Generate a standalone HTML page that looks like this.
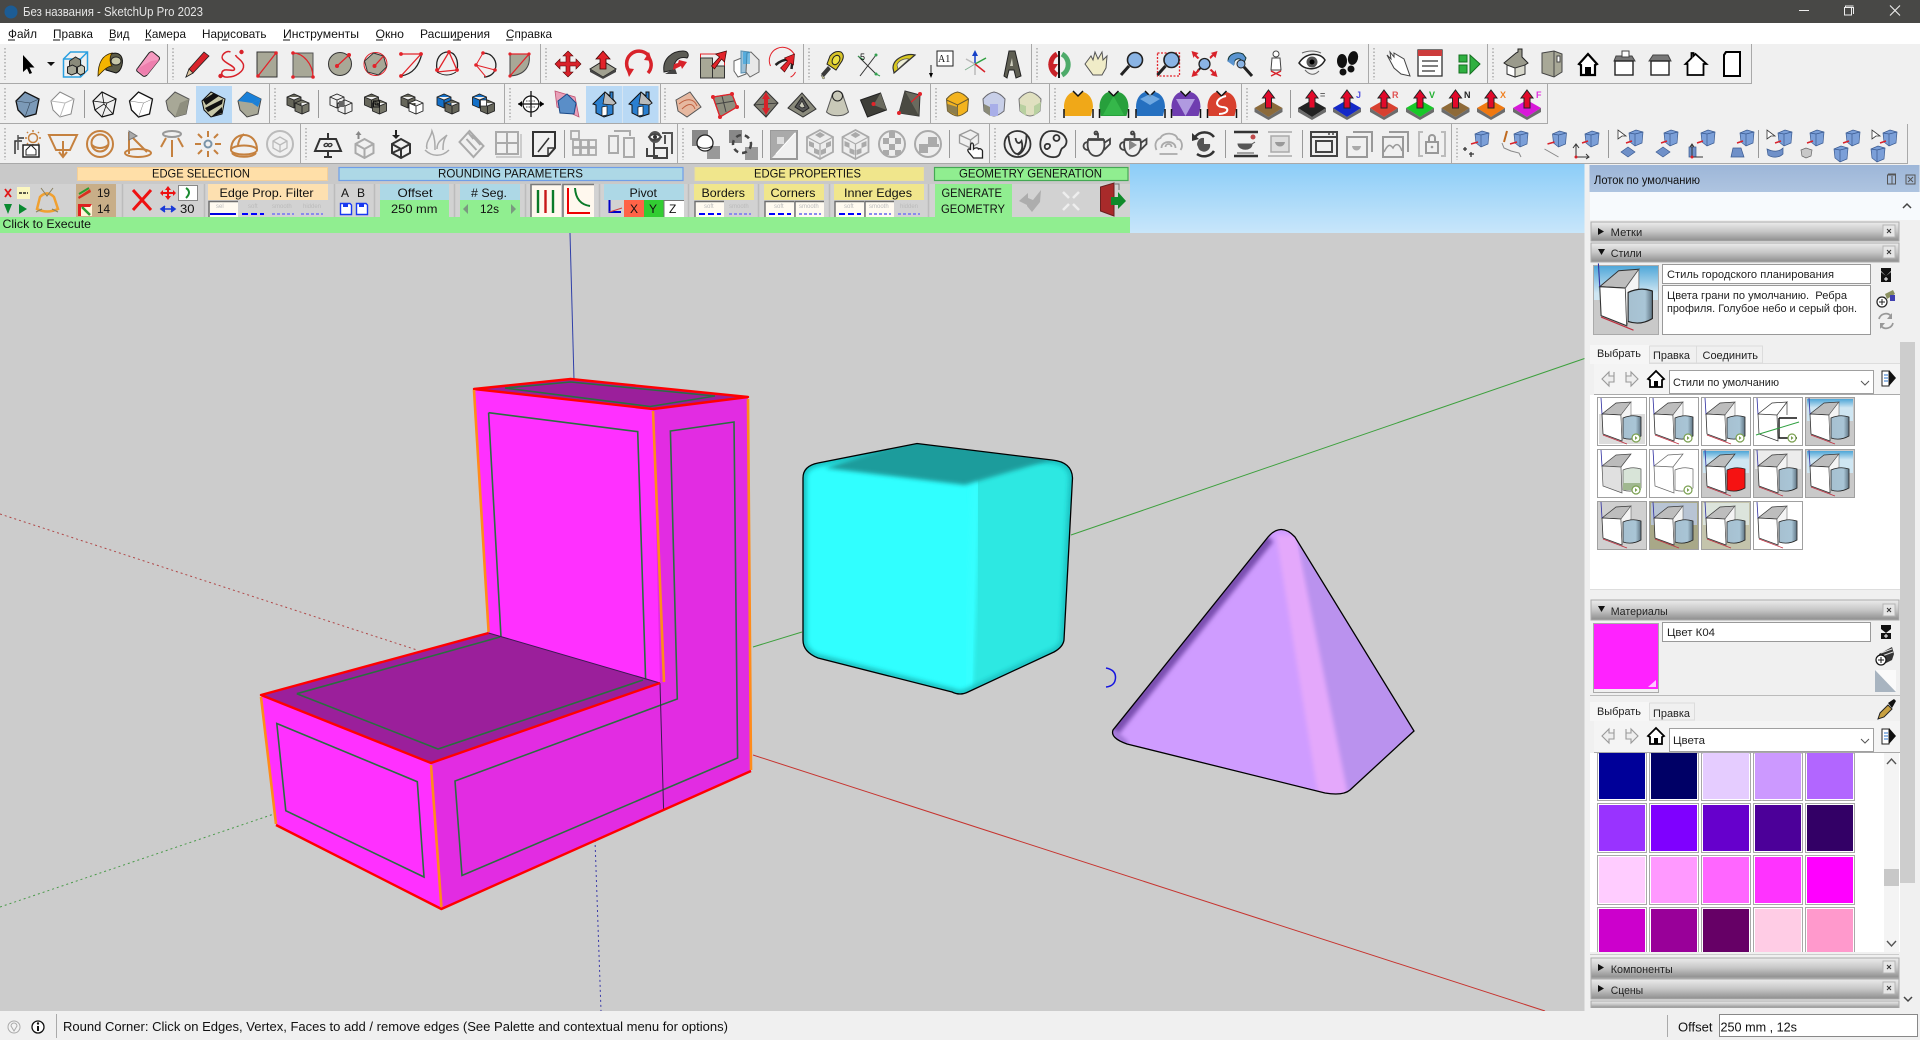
<!DOCTYPE html>
<html lang="ru"><head><meta charset="utf-8"><title>Без названия - SketchUp Pro 2023</title>
<style>
html,body{margin:0;padding:0;background:#f0f0f0;overflow:hidden}
svg{display:block}
text{font-family:"Liberation Sans","Noto Sans CJK SC",sans-serif;font-size:12px;fill:#111}
.r{font-size:12px;fill:#111}
.t{font-size:11px;fill:#222}
.tiny{font-size:6px;fill:#bbb}
</style></head><body>
<svg xmlns="http://www.w3.org/2000/svg" width="1920" height="1040" viewBox="0 0 1920 1040">
<defs>
<linearGradient id="sky" x1="0" y1="0" x2="0" y2="1"><stop offset="0" stop-color="#8ccdf8"/><stop offset="1" stop-color="#c8e6fa"/></linearGradient>
<linearGradient id="hdr" x1="0" y1="0" x2="0" y2="1"><stop offset="0" stop-color="#ececec"/><stop offset=".5" stop-color="#c6c6c6"/><stop offset="1" stop-color="#8d8d8d"/></linearGradient>
<linearGradient id="tray" x1="0" y1="0" x2="0" y2="1"><stop offset="0" stop-color="#9db6d8"/><stop offset="1" stop-color="#aec4e0"/></linearGradient>
<linearGradient id="thsky" x1="0" y1="0" x2="0" y2="1"><stop offset="0" stop-color="#4da6d8"/><stop offset=".4" stop-color="#cfe6f2"/></linearGradient>
<linearGradient id="cyl" x1="0" y1="0" x2="1" y2="0"><stop offset="0" stop-color="#a6c0d0"/><stop offset=".7" stop-color="#a9c5d6"/><stop offset="1" stop-color="#5f7482"/></linearGradient>
<filter id="b2" x="-20%" y="-20%" width="140%" height="140%"><feGaussianBlur stdDeviation="2"/></filter>
<filter id="b4" x="-20%" y="-20%" width="140%" height="140%"><feGaussianBlur stdDeviation="4"/></filter>
<clipPath id="cubeclip"><path id="cubep" d="M917 443.500 1052 460Q1072 462 1072.500 478L1064 640Q1063 647 1054 652L968 692Q960 696 952 692L818 658Q803 652 803 640V478Q803 466 818 463Z"/></clipPath>
<clipPath id="pyrclip"><path d="M1268 537Q1281 522 1295 537L1414 731 1350 790Q1343 796 1325 793L1127 744Q1110 738 1113 730Z"/></clipPath>
<g id="thgeo">
<path d="M5 17 19 6 34 5 24 18Z" fill="#bdbdbd" stroke="#333" stroke-width=".7"/>
<path d="M5 17 24 18 25 44 6 37Z" fill="#fff" stroke="#333" stroke-width=".8"/>
<path d="M24 18 34 5V18L25 44Z" fill="#f4f4f4" stroke="#555" stroke-width=".5"/>
<path d="M26 21Q35 17 44 20V39Q35 44 26 41Z" fill="url(#cyl)" stroke="#222" stroke-width=".8"/>
<path d="M4 1 5 17" stroke="#3030a0" stroke-width=".8"/>
<path d="M6 38 30 47" stroke="#c03040" stroke-width=".8"/>
</g>
<g id="thgeored">
<path d="M5 17 19 6 34 5 24 18Z" fill="#bdbdbd" stroke="#333" stroke-width=".7"/>
<path d="M5 17 24 18 25 44 6 37Z" fill="#fff" stroke="#333" stroke-width=".8"/>
<path d="M26 21Q35 17 44 20V39Q35 44 26 41Z" fill="#f51212" stroke="#222" stroke-width=".8"/>
<path d="M4 1 5 17" stroke="#3030a0" stroke-width=".8"/><path d="M6 38 30 47" stroke="#c03040" stroke-width=".8"/>
</g>
<g id="clock"><circle cx="39" cy="41" r="4" fill="#fff" stroke="#7aa050" stroke-width="1.200"/><path d="M38 39v4l2.500-2z" fill="#7aa050"/></g>
<path id="ar" d="M-5-9V8l4-3.500 2.500 5.500 2.500-1-2.500-5.500h5z" fill="#000"/>
<g id="comp"><path d="M-12-5-5-12H12V6L5 13H-12ZM-12-5H5V13M5-5 12-12" fill="none" stroke="#2a9fe0" stroke-width="1.500"/><path d="M-6-3 0-7 5-4V4L-1 7-6 4Z" fill="#8a8a7a" stroke="#222"/><path d="M-8 3-3 1 1 3V9L-4 11-8 9Z" fill="#a5a595" stroke="#222"/><path d="M2 3 6 1 9 3V9L5 11 2 9Z" fill="#c8c8b8" stroke="#222"/></g>
<g id="paint"><path d="M-5-4C-2-11 7-13 11-8 14-3 12 7 6 9L-4 6Z" fill="#5c5c48" stroke="#111"/><path d="M2-11C-8-9-12 0-12 12-8 8-3 2 2 2-1-2 0-8 2-11Z" fill="#f4b400" stroke="#332200" stroke-width=".8"/><ellipse cx="6" cy="-3" rx="5" ry="4" fill="#c8c8a8" stroke="#222"/></g>
<g id="erase"><path d="M-10 5 2-11Q4-13 6-12L12-7Q13-6 12-4L0 11Q-2 13-4 12L-9 8Q-11 7-10 5Z" fill="#f59ac0" stroke="#222"/><path d="M-10 5-5 10 0 11 12-4 4-3Z" fill="#ee7fae"/></g>
<g id="pencil"><path d="M-11 13-8 5 7-12 12-8-4 9Z" fill="#d8222a" stroke="#222" stroke-width=".8"/><path d="M-11 13-8 5-4 9Z" fill="#e0c8a0" stroke="#222" stroke-width=".8"/></g>
<g id="free" fill="#d8222a"><path d="M-2-12C-6-14-12-9-10-5-8-1 2 2 2 5 2 8-4 5-8 6-13 8-11 14-4 13 2 13 12 8 11 1 10-4 4-6 3-9" fill="none" stroke="#d8222a" stroke-width="1.500"/><circle cx="9" cy="-12" r="2.200"/><circle cx="-12" cy="12" r="2.200"/></g>
<g id="rect"><path d="M-10-12H10V13H-10Z" fill="#a8a897" stroke="#333"/><path d="M-9 12 9-11" stroke="#e2232a" stroke-width="1.300"/><circle cx="9" cy="-11" r="1.800" fill="#e2232a"/><circle cx="-9" cy="12" r="1.800" fill="#e2232a"/></g>
<g id="rrect"><path d="M-10-11H10V13H-10Z" fill="#a8a897" stroke="#555"/><path d="M-10-11C0-11 10 0 10 13" fill="none" stroke="#e2232a" stroke-width="1.300"/><g fill="#e2232a"><circle cx="-10" cy="-11" r="1.800"/><circle cx="-10" cy="13" r="1.800"/><circle cx="10" cy="13" r="1.800"/></g></g>
<g id="circ"><circle r="11.500" fill="#a8a897" stroke="#333"/><path d="M-3 2 9-9" stroke="#e2232a" stroke-width="1.300"/><circle cx="-3" cy="2" r="2" fill="#e2232a"/><circle cx="9" cy="-9" r="2" fill="#e2232a"/></g>
<g id="poly"><circle r="11.500" fill="none" stroke="#e2232a"/><path d="M-2-11 8-8 11 3 3 11-8 8-11-3Z" fill="#a8a897" stroke="#333"/><path d="M-1 2 8-8" stroke="#e2232a" stroke-width="1.300"/><circle cx="-1" cy="2" r="2" fill="#e2232a"/></g>
<g id="arc1"><path d="M-10 12C2 10 8 2 11-11" fill="none" stroke="#222" stroke-width="1.300"/><path d="M-10-10H10L-10 12" fill="none" stroke="#e2232a" stroke-width="1.300"/><g fill="#e2232a"><circle cx="-10" cy="-10" r="1.900"/><circle cx="10" cy="-10" r="1.900"/><circle cx="-10" cy="12" r="1.900"/></g></g>
<g id="arc2"><path d="M-10 6C-12-6-6-12 1-12 8-12 12-4 10 6" fill="none" stroke="#222" stroke-width="1.300"/><path d="M-10 8 2-12 10 6 -10 8" fill="none" stroke="#e2232a" stroke-width="1.300"/><path d="M-10 8Q0 14 9 8" fill="none" stroke="#222"/><g fill="#e2232a"><circle cx="-10" cy="6" r="1.900"/><circle cx="2" cy="-12" r="1.900"/><circle cx="10" cy="6" r="1.900"/></g></g>
<g id="arc3"><path d="M-2-11C8-11 13-2 10 6 8 11 3 13-1 13" fill="none" stroke="#222" stroke-width="1.300"/><path d="M-2-11-9 1 10 6M-9 1 1 13" fill="none" stroke="#e2232a" stroke-width="1"/><g fill="#e2232a"><circle cx="-2" cy="-11" r="1.800"/><circle cx="-9" cy="1" r="1.800"/><circle cx="10" cy="6" r="1.800"/></g></g>
<g id="pie"><path d="M-9-10H10C12 2 6 11-9 12Z" fill="#a8a897" stroke="#444"/><path d="M-9 12 10-10H-9" fill="none" stroke="#e2232a" stroke-width="1.300"/><g fill="#e2232a"><circle cx="-9" cy="-10" r="1.600"/><circle cx="10" cy="-10" r="1.600"/><circle cx="-9" cy="12" r="1.600"/></g></g>
<g id="move" fill="#d8222a" stroke="#500" stroke-width=".6"><path d="M0-13 5-8H2V-2H8V-5L13 0 8 5V2H2V8H5L0 13-5 8H-2V2H-8V5L-13 0-8-5V-2H-2V-8H-5Z"/></g>
<g id="pp"><path d="M-13 5 0-3 13 5 0 13Z" fill="#a0a090" stroke="#222"/><path d="M-13 5V8L0 15V13ZM13 5V8L0 15V13Z" fill="#444"/><path d="M0-13 7-5H3V5H-3V-5H-7Z" fill="#e2232a" stroke="#400" stroke-width=".8"/></g>
<g id="rot"><path d="M-9 8A12 12 0 0 1 9-9" fill="none" stroke="#d8222a" stroke-width="3.500"/><path d="M9 9A12 12 0 0 0 10-6" fill="none" stroke="#d8222a" stroke-width="3.500"/><path d="M-13 4-5 5-10 13ZM13-3 5-4 10-12Z" fill="#d8222a"/></g>
<g id="follow"><path d="M-12 8C-14-5-4-13 7-13 13-13 13-8 11-6 3-8-3-3-2 6Z" fill="#5c5c55" stroke="#222"/><path d="M-11 10-1 4 1 10Z" fill="#444"/><path d="M3-4 11-2 6 5 5 2-3 6-2 0 2-1Z" fill="#d8222a"/></g>
<g id="scale"><rect x="-12" y="-10" width="24" height="24" fill="none" stroke="#e2232a"/><path d="M-12-6H0V14H-12Z M0 2H12V14H0Z" fill="#a8a897" stroke="#333"/><path d="M-1 2 7-7 3-10 14-13 12-2 9-5 2 5Z" fill="#e2232a" stroke="#400" stroke-width=".7"/></g>
<g id="offs"><path d="M-13-3-3-7-1 10-9 13-13 7Z" fill="#fff" stroke="#666"/><path d="M-6-13 2-12V8L-6 9Z" fill="#9cc0d8" stroke="#5a90b0"/><path d="M0-11 4-12 12-4V8L3 13-1 8Z" fill="#e8e8e8" stroke="#666"/><path d="M-4-12 3-12 3 0-4 0Z" fill="#2a9fe0" opacity=".6"/></g>
<g id="shell"><path d="M-13 2A13 13 0 0 1 11-9M12 8Q10 12 7 13" fill="none" stroke="#e2232a" stroke-width="1"/><path d="M-8 1Q0-6 9-4L8 5" fill="none" stroke="#222" stroke-width="2.500"/><path d="M-3 4 4-3 1-6 11-10 10 1 7-1 1 8Z" fill="#e2232a" stroke="#400" stroke-width=".6"/></g>
<g id="tape"><path d="M-2-8Q3-14 9-12 13-9 10-3L4 6-5 0Z" fill="#d8c428" stroke="#222"/><ellipse cx="4" cy="-4" rx="3.500" ry="5" transform="rotate(30 4 -4)" fill="#ece040" stroke="#222"/><path d="M-4 2-11 10-8 13-1 5Z" fill="#3a3a3a"/><path d="M-11 11-7 14-9 15Z" fill="#e2e2a0" stroke="#444" stroke-width=".5"/></g>
<g id="dim"><path d="M-8 12 8-9M-10-8 8 10" fill="none" stroke="#333"/><path d="M-10-8-4-4M8 10 12 12" stroke="#33a050"/><text x="-8" y="-4" style="font-size:9px">5</text><circle cx="8" cy="-9" r="1.500" fill="#33a050"/><circle cx="8" cy="10" r="1.500" fill="#33a050"/></g>
<g id="prot"><path d="M-10 9 11-9C3-11-11-6-11 4Z" fill="#d8c820" stroke="#333" stroke-width="1.200"/><path d="M-6 5 5-5C0-6-6-3-7 1Z" fill="#f0f0d8" stroke="#555" stroke-width=".7"/></g>
<g id="txt"><rect x="-5" y="-13" width="16" height="15" fill="#fff" stroke="#222"/><text x="-4" y="-2" style="font-size:10px;font-family:'Liberation Serif',serif">A1</text><path d="M-11 1V10" stroke="#222"/><path d="M-13 9H-9L-11 14Z" fill="#000"/></g>
<g id="axes"><path d="M0 0V-12" stroke="#1540c8" stroke-width="1.500"/><path d="M0 0 11-6" stroke="#30a040" stroke-width="1.500"/><path d="M0 0-9-5M0 0 0 11" stroke="#bbb" stroke-width="1.500"/><path d="M0 0 10 8" stroke="#d8222a" stroke-width="1.500"/><path d="M0 0-10 6" stroke="#80b090"/><path d="M-3-8 0-14 3-8Z" fill="#1540c8"/></g>
<g id="t3d"><path d="M-7 12-2-13H4L10 12 5 14 3 6H-2L-4 14Z" fill="#5e5e52" stroke="#222"/><path d="M-1 2H2L1-6Z" fill="#d0d0c0"/></g>
<g id="orbit"><path d="M-3-10A12 12 0 0 0-3 11" fill="none" stroke="#c82228" stroke-width="5"/><path d="M2-10A12 12 0 0 1 2 11" fill="none" stroke="#4eab6a" stroke-width="5"/><path d="M-1-13V14" stroke="#000" stroke-width="1.800"/><path d="M-12 0-6 6-2 0Z" fill="#c82228"/></g>
<g id="hand"><path d="M-11 0-5-8-3-4-1-12 2-5 6-12 7-4 11-8 10 4 6 11H-3Z" fill="#f0ecc8" stroke="#555"/></g>
<g id="zoom"><circle cx="3" cy="-4" r="7.500" fill="#8ab4e4" stroke="#222" stroke-width="1.600"/><path d="M-3 2-11 11" stroke="#222" stroke-width="3"/></g>
<g id="zoomw"><rect x="-11" y="-11" width="22" height="23" fill="none" stroke="#e2232a" stroke-dasharray="2 1.500" stroke-width="1.300"/><use href="#zoom"/></g>
<g id="zoomx"><circle cx="0" cy="0" r="5.500" fill="#8ab4e4" stroke="#222" stroke-width="1.300"/><path d="M-4 4-7 7" stroke="#222" stroke-width="2"/><path d="M-13-13-6-11-8-9-5-6-7-5-10-8-11-6ZM13-13 11-6 9-8 6-5 5-7 8-10 6-11ZM-13 13-11 6-9 8-6 5-5 7-8 10-6 11ZM13 13 6 11 8 9 5 6 7 5 10 8 11 6Z" fill="#d8222a"/></g>
<g id="zoomp"><path d="M-12-3C-12-10-3-13 3-10L6-6 4-1 0-5C-3-6-6-4-6 0Z" fill="#5a94d0" stroke="#133"/><path d="M-13-3-6 2-5-7Z" fill="#5a94d0"/><circle cx="1" cy="0" r="4" fill="#8ab4e4" stroke="#222"/><path d="M4 3 12 12" stroke="#222" stroke-width="3"/></g>
<g id="poscam"><ellipse cy="-10" rx="3" ry="3" fill="#fff" stroke="#444"/><path d="M-4-6H4L5 6H-5Z" fill="#fff" stroke="#444"/><path d="M-5 12 5 7M5 12-5 7" stroke="#d8222a" stroke-width="1.400"/></g>
<g id="look"><path d="M-13-1C-6-12 8-12 13-4 8 6-6 8-13-1Z" fill="#fff" stroke="#222" stroke-width="1.500"/><circle cx="0" cy="-2" r="5.500" fill="#555"/><circle cx="0" cy="-2" r="2.500" fill="#000"/><path d="M-7 6Q0 14 7 7M-10-11Q0-15 9-11" fill="none" stroke="#666"/></g>
<g id="walk" fill="#111"><ellipse cx="-5" cy="-3" rx="5" ry="7"/><ellipse cx="-4" cy="8" rx="3.500" ry="3.500"/><ellipse cx="6" cy="-6" rx="5" ry="7" transform="rotate(15 6 -6)"/><ellipse cx="4" cy="5" rx="3.500" ry="3.500"/></g>
<g id="hand2"><path d="M-4-11 6-5 12 12 3 10-4 4-11-9-7-5-8-12-4-7Z" fill="#fff" stroke="#444"/></g>
<g id="list"><rect x="-12" y="-14" width="24" height="26" fill="#fff" stroke="#333" stroke-width="1.300"/><rect x="-12" y="-14" width="24" height="6" fill="#cd3c3c"/><path d="M-8-3H8M-8 2H8M-8 7H5" stroke="#333" stroke-width="1.300"/></g>
<g id="green"><path d="M-9-9H-1V-2H-9ZM-9 1H-1V9H-9ZM2-9 12 0 2 10Z" fill="#2fb040" stroke="#147020"/></g>
<g id="vhouse"><path d="M-12-1 0-11 2-12V-15H6V-7L12-1 9 1V10L-1 13-9 10V1Z" fill="#9a9a8c" stroke="#222"/><path d="M-9 1-1 4-1 13-9 10Z" fill="#fff" stroke="#333"/><path d="M-1 4 9 1V10L-1 13Z" fill="#d8d8cc" stroke="#333"/></g>
<g id="vdoor"><path d="M-10-11 2-13 10-10V8L2 13-10 9Z" fill="#a8a897" stroke="#444"/><path d="M2-13V13" stroke="#444"/><rect x="5" y="-8" width="3" height="6" fill="#fff" stroke="#444"/></g>
<g id="vhm"><path d="M0-10-9 0-7 1V11H7V1L9 0Z" fill="#fff" stroke="#000" stroke-width="2.200"/><path d="M-3 11V3H3V11Z" fill="#000"/></g>
<g id="vroof"><path d="M-10-3-8-8-2-8-2-13H5V-8H8L11-3Z" fill="#777" stroke="#444"/><rect x="-9" y="-3" width="18" height="14" fill="#fff" stroke="#222" stroke-width="1.400"/><rect x="-2" y="-13" width="7" height="6" fill="#fff" stroke="#444"/></g>
<g id="vroof2"><path d="M-11-3-7-9H8L11-3Z" fill="#777" stroke="#444"/><rect x="-9" y="-3" width="18" height="14" fill="#fff" stroke="#222" stroke-width="1.400"/></g>
<g id="vhse"><path d="M-10 0-4-6V-11H-2V-8L0-10 11 0 8 0V11H-8V0Z" fill="#fff" stroke="#000" stroke-width="1.800"/></g>
<g id="vflat"><path d="M-5-12H9V12H-7V-9Z" fill="#fff" stroke="#000" stroke-width="2"/><path d="M-5-12-7-9V-3" fill="none" stroke="#000" stroke-width="2"/></g>
<g id="f1"><path d="M-12-3-3-12 11-5 8 10-3 13-10 6Z" fill="#7c9ab8" stroke="#111" stroke-width="1.300"/><path d="M-12-3 2-1-3 13M2-1 11-5" fill="none" stroke="#345" stroke-width=".6"/></g>
<g id="f2"><path d="M-12-3-3-12 11-5 8 10-3 13-10 6Z" fill="#fff" stroke="#888"/><path d="M-12-3 2-1-3 13M2-1 11-5" fill="none" stroke="#bbb"/></g>
<g id="f3"><path d="M-12-3-3-12 11-5 8 10-3 13-10 6Z" fill="none" stroke="#111" stroke-width="1.200"/><path d="M-12-3 2-1-3 13M2-1 11-5M-10 6-1 0 8 10M-3-12-1 0" fill="none" stroke="#111" stroke-width=".8"/></g>
<g id="f4"><path d="M-12-3-3-12 11-5 8 10-3 13-10 6Z" fill="#fff" stroke="#111" stroke-width="1.300"/><path d="M-12-3 2-1-3 13M2-1 11-5" fill="none" stroke="#777" stroke-width=".5"/></g>
<g id="f5"><path d="M-12-3-3-12 11-5 8 10-3 13-10 6Z" fill="#a8a897" stroke="#555"/><path d="M2-1-3 13 8 10 11-5Z" fill="#8e8e7e"/></g>
<g id="f6"><path d="M-12-3-3-12 11-5 8 10-3 13-10 6Z" fill="#c8c8a8" stroke="#111"/><path d="M-11-4 0-11 5-8-8 1ZM-9 4 9-5 8 0-6 8ZM-3 13 8 3 8 9Z" fill="#111"/></g>
<g id="f7"><path d="M-12-3-3-12 11-5 8 10-3 13-10 6Z" fill="#a8a897" stroke="#444"/><path d="M-12-3-3-12 11-5 2-1Z" fill="#1a80d8"/><path d="M2-1 11-5 8 3Z" fill="#1a80d8"/></g>
<path id="ck" d="M-7-4 0-7 7-4V4L0 7-7 4ZM-7-4 0-1 7-4M0-1V7" stroke="#222" stroke-width=".9"/>
<g id="x1" fill="#66665a"><use href="#ck" x="-4" y="-3"/><use href="#ck" x="4" y="3" fill="#77776a"/></g>
<g id="x2" fill="none"><use href="#ck" x="-4" y="-3"/><use href="#ck" x="4" y="3"/><rect x="-2" y="-3" width="5" height="6" fill="#666"/></g>
<g id="x3" fill="#66665a"><use href="#ck" x="-4" y="-3"/><use href="#ck" x="4" y="3" fill="#77776a"/><rect x="-2" y="-3" width="6" height="6" fill="none" stroke="#111"/><rect x="0" y="-1" width="2" height="2" fill="none" stroke="#111" stroke-width=".7"/></g>
<g id="x4"><use href="#ck" x="-4" y="-3" fill="#66665a"/><use href="#ck" x="4" y="3" fill="#fff"/></g>
<g id="x5"><use href="#ck" x="-4" y="-3" fill="#1470c8"/><use href="#ck" x="4" y="3" fill="#66665a"/></g>
<g id="x6"><use href="#ck" x="-4" y="-3" fill="#1470c8"/><use href="#ck" x="4" y="3" fill="#66665a"/><rect x="-3" y="-4" width="6" height="6" fill="#fff" stroke="#222" stroke-width=".7"/></g>
<g id="sec"><circle r="8" fill="#fff" stroke="#111" stroke-width="1.200"/><path d="M-13 0H13M0-13V13" stroke="#111" stroke-width="1.300"/><path d="M-5-3H5M-5 3H5" stroke="#555" stroke-dasharray="1.500 1"/><path d="M-13 0-9-3V3ZM13 0 9-3V3Z"/></g>
<g id="sp"><path d="M-12-13 8-7 12 13-10 3Z" fill="#e8a0b8" stroke="#c05070" stroke-width=".8"/><path d="M-9-3 0-10 9-1 7 10-7 9Z" fill="#5a8ec8" stroke="#1a4a88"/></g>
<g id="hs1"><path d="M-11 0 1-12 6-8V-12H9V-5L12-1 9 1V10L0 13-8 9V1Z" fill="#2a7fd0" stroke="#111"/><path d="M1-12 12-1 9 1-1 0Z" fill="#bbb" stroke="#111" stroke-width=".7"/><path d="M-2 3 3 2V11L-2 12Z" fill="#fff" stroke="#111" stroke-width=".7"/></g>
<g id="sand"><path d="M-12-4 2-12 13 3-1 13-10 7Z" fill="#e6b8a0" stroke="#555"/><path d="M-9 0C-2-6 6-6 9 2M-6 5C0-1 5-1 7 5" fill="none" stroke="#c06040" stroke-width="1"/></g>
<g id="sand2"><path d="M-11-7 8-10 13 3-4 13Z" fill="#8e8e7e" stroke="#444"/><path d="M-11-7-4 13M8-10 13 3M-2-8 2 8M-8 0 10-3" stroke="#444" fill="none"/><path d="M-11-7 8-10 13 3-4 13Z" fill="none" stroke="#e2232a" stroke-width="1.300"/><g fill="#e2232a"><circle cx="-11" cy="-7" r="2"/><circle cx="8" cy="-10" r="2"/><circle cx="13" cy="3" r="2"/><circle cx="-4" cy="13" r="2"/></g></g>
<g id="sand3"><path d="M-12 1 0-13 12-1 0 13Z" fill="#807e72" stroke="#333"/><path d="M0-13 0 13M-12 1 12-1" stroke="#333" stroke-width=".8"/><path d="M0-12 4-5H2V4H4L0 11-4 4H-2V-5H-4Z" fill="#d8222a"/></g>
<g id="sand4"><path d="M-14 4 0-11 14 5 1 13Z" fill="#8a8a7c" stroke="#333"/><path d="M-7 3 0-7 7 4 1 8Z" fill="#555" stroke="#222"/><path d="M-3 2 0-3 3 3 0 4Z" fill="#c8c8b8" stroke="#222" stroke-width=".7"/></g>
<g id="sand5"><path d="M-7-4C-5-9-6-12 0-13 6-12 5-9 7-4L11 8C6 13-6 13-11 8Z" fill="#c8c8b8" stroke="#555"/><ellipse cy="-8" rx="5" ry="5" fill="none" stroke="#222"/></g>
<g id="sand6"><path d="M-13-4 7-11 13 6-6 13Z" fill="#3e3e38" stroke="#222"/><path d="M7-11 13 6 0 1Z" fill="#6a6a5e"/><circle r="2" fill="#e2232a"/></g>
<g id="sand7"><path d="M-10 9-4-13 11-9 10 12Z" fill="#6a6a5e" stroke="#333"/><path d="M-10 9 10-9" stroke="#e2232a" stroke-width="1.300"/><path d="M-4-13-10 9 10 12Z" fill="#4a4a42"/><circle cx="-10" cy="9" r="2" fill="#e2232a"/><circle cx="11" cy="-10" r="2" fill="#e2232a"/></g>
<g id="rc1"><path d="M-11-5Q-6-11 0-12 6-11 11-5L10 7Q4 12 0 12-4 12-10 7Z" fill="#f4b41f" stroke="#6a5a30"/><path d="M-11-4 0 1 11-5M0 1V12" stroke="#6a5a30" fill="none"/><path d="M-10 0V7L0 12V3Z" fill="#8e7e4c"/></g>
<g id="rc2"><path d="M-11-5Q-6-11 0-12 6-11 11-5L10 7Q4 12 0 12-4 12-10 7Z" fill="#c8cfe8" stroke="#6a6a70"/><path d="M-4 0H4V12H-4Z" fill="#a8aee8"/><path d="M-10 0-4 3V12L-10 7Z" fill="#8a8a78"/></g>
<g id="rc3"><path d="M-11-5Q-6-11 0-12 6-11 11-5L10 7Q4 12 0 12-4 12-10 7Z" fill="#e0e0c0" stroke="#777"/><path d="M-10 0-4 2V12L-10 7ZM4 2 11-2 10 7 4 12Z" fill="#b8d0a0"/></g>
<g id="big"><path d="M-14 3C-14-6-9-11-5-12L0-8 5-12C10-11 15-6 15 3L13 12H-13Z"/><path d="M-5-13 0-8 5-13M-14 5V14M15 5V14" fill="none" stroke="#111" stroke-width="1.500"/></g>
<g id="pps"><path d="M-14 4 0-4 14 4 0 13Z"/><path d="M-14 4 0 13V16L-14 8ZM14 4 0 13V16L14 8Z" fill="#333" opacity=".7"/><path d="M0-14 6-6H3V4H-3V-6H-6Z" fill="#e2092a" stroke="#222" stroke-width="1"/></g>
<g id="o0"><path d="M-6-3H-13V10M-10-6H-4" fill="none" stroke="#333" stroke-width="1.500"/><path d="M-10-9V6" stroke="#555" fill="none" stroke-width="1.500"/><circle cx="5" cy="-6" r="4.500" fill="none" stroke="#c5813f" stroke-width="1.500"/><path d="M5-14V-12M5 0V2M-3-6H-1M11-6H13M-1-12 0-11M10-1 11 0M11-12 10-11M0-1-1 0" stroke="#c5813f" stroke-width="1.500"/><rect x="-5" y="1" width="16" height="12" fill="#fff" stroke="#222" stroke-width="1.500"/><path d="M-2 6 3 1 8 6V11H-2Z" fill="#fff" stroke="#222"/></g>
<g id="o1" fill="none" stroke="#c5813f" stroke-width="2"><path d="M-14-9H14L7 6H-7Z"/><path d="M0-3V13M-4 8 0 13 4 8"/></g>
<g id="o2" fill="none" stroke="#c5813f" stroke-width="2"><circle r="13"/><circle cy="-1" r="8.500"/><path d="M-8 1C-4 5 4 5 8 1"/></g>
<g id="o3" fill="none" stroke="#c5813f" stroke-width="2"><path d="M-8-10 10 8"/><path d="M-8-12V10"/><ellipse cx="1" cy="9" rx="13" ry="4"/><path d="M-8-13-8-4 0-8Z" fill="#aaa" stroke="#777" stroke-width="1"/></g>
<g id="o4" fill="none" stroke="#c5813f" stroke-width="2"><path d="M0-4V13M-11 3-6-6M11 3 6-6"/><ellipse cy="-10" rx="9" ry="3" stroke="#999"/></g>
<g id="o5" fill="none" stroke="#c5813f" stroke-width="2"><circle r="3.500" stroke="#7a94a8"/><path d="M0-13V-7M0 7V13M-13 0H-7M7 0H13M-10-10-6-6M6 6 10 10M10-10 6-6M-6 6-10 10"/></g>
<g id="o6" fill="none" stroke="#c5813f" stroke-width="2"><path d="M-13 6C-13-14 13-14 13 6"/><ellipse cy="6" rx="13" ry="4.500"/><path d="M-12 9C-8 14 8 14 12 9M0-10C-5-6-6 0-6 2"/></g>
<g id="o7" fill="none" stroke="#bbb" stroke-width="2"><circle r="13"/><path d="M0-7-7-3V4L0 8 7 4V-3ZM-7-3 0 1 7-3M0 1V8" stroke-width="1.300"/></g>
<g id="g1" fill="none" stroke="#333" stroke-width="2"><path d="M-8-5H8L13 7H-13ZM0-11V-5M0 7V13M-4 13H4"/><path d="M-4 1C-2-2 0 0 0 1 0 2 2 4 4 1 4-1 1-1 0 1-1 3-4 3-4 1Z" stroke-width="1.300"/></g>
<g id="g2" fill="none" stroke="#aaa" stroke-width="2"><path d="M0-5-9 0V9L0 14 9 9V0ZM-9 0 0 5 9 0M0 5V14"/><path d="M-9-9-6-13-3-9Z" fill="#888" stroke="none"/><path d="M-6-9V-5" stroke="#888"/></g>
<g id="g3" fill="none" stroke="#333" stroke-width="2"><path d="M0-5-9 0V9L0 14 9 9V0ZM-9 0 0 5 9 0M0 5V14M-9 9 0 5"/><path d="M-9-9-5-5-1-9Z" fill="#222" stroke="none"/><path d="M-5-14V-8" stroke="#222"/></g>
<g id="g4" fill="none" stroke="#aaa" stroke-width="1.500"><path d="M-10 5C-12-2-6-6-5-13-2-6-2 0-2 6M0 5C0-3 6-5 10-9 6-4 6 2 6 6M-12 6C-5 13 5 13 12 6"/></g>
<g id="g5" fill="none" stroke="#aaa" stroke-width="2"><path d="M-12-2-2-13 12 2 2 13Z"/><path d="M-5-5 5 6M0-9 9 1M-3-11 2-5"/></g>
<g id="g6" fill="none" stroke="#aaa" stroke-width="2"><rect x="-12" y="-12" width="11" height="11"/><rect x="-1" y="-12" width="11" height="11"/><rect x="-12" y="-1" width="11" height="11"/><rect x="-1" y="-1" width="11" height="11"/><path d="M-12 13H13V-10" stroke="#ccc"/></g>
<g id="g7" fill="none" stroke="#333" stroke-width="2"><path d="M-11-12H11V4L4 12H-11Z"/><path d="M4 12V4H11M-6 8 5-6" stroke-width="1.500"/></g>
<g id="g8" fill="none" stroke="#aaa" stroke-width="1.800"><rect x="-13" y="-13" width="8" height="8"/><rect x="-3" y="-4" width="7" height="7"/><rect x="5" y="-4" width="7" height="7"/><rect x="-3" y="4" width="7" height="7"/><rect x="5" y="4" width="7" height="7"/><rect x="-11" y="-4" width="7" height="7"/><rect x="-11" y="4" width="7" height="7"/></g>
<g id="g9" fill="none" stroke="#aaa" stroke-width="2"><path d="M-13-8H-4V9H-13ZM-8-13H8V-8M2-6H12V13H2Z"/></g>
<g id="g10" fill="none" stroke="#444" stroke-width="2"><path d="M-11 4V12H0M-4 4H9V14H-4Z M-4-5 V4"/><circle cx="-3" cy="-7" r="5" stroke="#555"/><path d="M-9-7C-6-11 0-11 3-7-1-3-6-3-9-7Z" fill="#fff"/><circle cx="-3" cy="-7" r="2" fill="#333" stroke="none"/><path d="M4-11H14V10M7-9V0" stroke="#555"/></g>
<g id="h1"><rect x="-13" y="-14" width="16" height="16" fill="#888"/><rect x="2" y="2" width="13" height="13" fill="#999"/><circle cy="-1" cx="0" r="8" fill="#fff" stroke="#222" stroke-width="1.300"/><path d="M-7 2C-4 5 4 5 7 2" fill="none" stroke="#222"/></g>
<g id="h2"><rect x="-13" y="-14" width="13" height="13" fill="#888"/><rect x="3" y="3" width="13" height="13" fill="#999"/><circle r="9" fill="none" stroke="#444" stroke-width="2.500" stroke-dasharray="5 4"/></g>
<g id="h3"><rect x="-13" y="-13" width="26" height="28" fill="none" stroke="#999" stroke-width="2"/><path d="M-13 15V-13H13Z" fill="#aaa"/><path d="M-7-7H0V0H-7Z" fill="#ddd"/><path d="M-8 10 11-11" stroke="#fff"/></g>
<g id="h4" fill="#aaa" stroke="#aaa"><path d="M0-14-13-7V8L0 15 13 8V-7Z" fill="#ededed" stroke-width="1.800"/><path d="M-13-7 0 0 13-7M0 0V15" fill="none" stroke-width="1.200"/><path d="M-11-3-6-1V4L-11 2ZM-6 4-1 6V11L-6 9ZM6-1 11-3V2L6 4ZM1 6 6 4V9L1 11ZM-5-9 0-6 5-9 0-12Z" stroke="none"/></g>
<g id="h5"><circle r="13" fill="#ededed" stroke="#aaa" stroke-width="2"/><path d="M-9-6H-3V0H-9ZM3-6H9V0H3ZM-3 0H3V6H-3ZM-9 6H-3V11H-9ZM3 6H9V11H3ZM-3-12H3V-6H-3Z" fill="#aaa"/></g>
<g id="h6"><circle r="13" fill="#ededed" stroke="#aaa" stroke-width="2"/><path d="M-11 0H0V-7H9V0ZM-9 0H0V9H-9ZM0 0H11V3H0Z" fill="#aaa"/></g>
<g id="h7"><path d="M-11-9 0-14 8-10V-1L0 4-11-1Z" fill="none" stroke="#999" stroke-width="1.300"/><path d="M-11-9 0-4 8-10M0-4V4" fill="none" stroke="#999" stroke-width="1.300"/><path d="M0 2C0-2 3-2 3 2V5C5 3 8 4 8 5 10 4 12 6 12 7V14H3L-2 8C-4 5-1 4 0 6Z" fill="#fff" stroke="#222" stroke-width="1.300"/></g>
<g id="j1" fill="none" stroke="#333" stroke-width="1.800"><circle r="13"/><path d="M-9-8C-8 3-4 10 0 10 4 8 6 4 4-3 2 0-1 0-2-6M9-9C9 0 7 8 0 11" /></g>
<g id="j2" fill="none" stroke="#333" stroke-width="1.800"><path d="M-2-13C-11-13-14-4-13 3-12 10-5 14 2 13 8 12 6 6 9 4 13 2 14-3 12-6 10-11 4-13-2-13Z"/><circle cx="3" cy="-6" r="3"/><path d="M-7 0C-3-1-2 3-6 5-9 6-10 1-7 0Z"/></g>
<g id="tp" fill="none" stroke="#444" stroke-width="1.800"><path d="M-8-4C-10 8-4 12 0 12 4 12 10 8 8-4Z"/><path d="M-8-5H8M-2-10H2V-6M-8-2C-14-2-14 6-8 6M8-1 14-5V0L8 6"/><circle cy="-11" r="1.500"/></g>
<g id="cl" fill="none" stroke="#aaa" stroke-width="1.800"><path d="M-12 6C-15-1-11-5-8-6-6-12 8-12 9-5 13-5 15 2 12 6M-9 10H9M-7 4C-7-4 7-4 7 4M-3 3C-3-1 3-1 3 3"/></g>
<g id="ref"><path d="M-9-7A12 12 0 0 1 10-7M10 7A12 12 0 0 1-7 10" fill="none" stroke="#333" stroke-width="2.500"/><path d="M-12-11-12-3-5-5Z" fill="#333"/><path d="M0-6V0H6A6 6 0 0 1-6 3 6 6 0 0 1 0-6Z" fill="#555"/></g>
<g id="tb1"><path d="M-12-12H12M-12 12H12" stroke="#333" stroke-width="2.500"/><path d="M-8 0C-7 7 6 7 6 0ZM-9 9H8" fill="#555" stroke="#555"/><path d="M6 0 9-2" stroke="#555"/><circle cx="7" cy="-7" r="2.500" fill="#c0494a"/></g>
<g id="tb2"><path d="M-12-12H12M-12 12H12" stroke="#bbb" stroke-width="2"/><rect x="-9" y="-8" width="18" height="16" fill="#ddd" stroke="#aaa" stroke-width="1.500"/><path d="M-5-2C-4 4 4 4 5-2Z" fill="#999"/></g>
<g id="fr1" fill="none" stroke="#444" stroke-width="2"><rect x="-13" y="-12" width="26" height="24"/><path d="M-13-7H13"/><rect x="-8" y="-3" width="16" height="11"/><path d="M4-10H6M8-10H10" stroke-width="1.500"/></g>
<g id="fr2" fill="none" stroke="#999" stroke-width="2"><rect x="-13" y="-7" width="20" height="20"/><path d="M-7-12H12V8"/><path d="M-8 2C-7 8 0 8 1 2Z" fill="#aaa" stroke="none"/></g>
<g id="fr3" fill="none" stroke="#999" stroke-width="2"><rect x="-13" y="-7" width="20" height="20"/><path d="M-7-12H12V8"/><path d="M-12 8C-8 0-6 0-3 4 -1 0 3-2 6 7" stroke-width="1.500"/></g>
<g id="fr4" fill="none" stroke="#bbb" stroke-width="2"><path d="M-9-12H-13V12H-9M9-12H13V12H9"/><rect x="-6" y="-2" width="12" height="11" stroke="#999"/><path d="M-3-2V-6C-3-10 3-10 3-6V-2" stroke="#999"/><circle cy="3" r="1.300" fill="#999" stroke="none"/></g>
<g id="cub"><path d="M-7-3 0-6 7-4 6 7-1 10-6 6Z" fill="#7b9fd8" stroke="#3a5a90" stroke-width=".7"/><path d="M-1-2V10M-7-3-1-2 7-4" fill="none" stroke="#3a5a90" stroke-width=".7"/></g>
<g id="ax1"><use href="#cub" x="6" y="-7"/><path d="M-5 0 2-2" stroke="#d8222a" stroke-width="1.500"/><path d="M-13 5H-9M-11 3V7M-7 10H-2M-5 8V13" stroke="#333" stroke-width="1.300"/></g>
<g id="ax2"><use href="#cub" x="8" y="-7"/><path d="M-6-13-9-2" stroke="#c06a20" stroke-width="2"/><path d="M-11-1-9 4-2 7 6 9 8 13" fill="none" stroke="#888"/><path d="M-3 0 4-2" stroke="#d8222a" stroke-width="1.500"/></g>
<g id="ax3"><use href="#cub" x="7" y="-7"/><path d="M-8 5 6 13" stroke="#888" stroke-width="1"/><path d="M-5 0 2-2" stroke="#d8222a" stroke-width="1.500"/></g>
<g id="ax4"><use href="#cub" x="8" y="-7"/><path d="M-8 13V1M-8 13H4M-11 4-8 0-5 4M2 10 5 13 2 15" fill="none" stroke="#333"/><circle cx="-8" cy="13" r="1.500" fill="#d8222a"/><path d="M-2-1 4-3" stroke="#d8222a" stroke-width="1.500"/></g>
<g id="ax5"><use href="#cub" x="7" y="-8"/><path d="M-11-14-11-5-7-8H-3Z" fill="#fff" stroke="#333" stroke-width=".8"/><path d="M-3-1 3-3" stroke="#d8222a" stroke-width="1.500"/><path d="M-8 8-1 3 6 8-1 13Z" fill="#6f90c8" stroke="#3a5a90" stroke-width=".7"/></g>
<g id="ax6"><use href="#cub" x="7" y="-8"/><path d="M-3-1 3-3" stroke="#d8222a" stroke-width="1.500"/><path d="M-8 8-1 3 6 8-1 13Z" fill="#6f90c8" stroke="#3a5a90" stroke-width=".7"/></g>
<g id="ax7"><use href="#cub" x="8" y="-8"/><path d="M-3-1 3-3" stroke="#d8222a" stroke-width="1.500"/><path d="M-11 3H-4V13H-11Z" fill="#6f90c8" stroke="#3a5a90" stroke-width=".7"/><path d="M-8 13V0M-8 13H3M-10 3-8 0-6 3" fill="none" stroke="#333"/><circle cx="-8" cy="13" r="1.500" fill="#d8222a"/></g>
<g id="ax8"><use href="#cub" x="8" y="-8"/><path d="M-2-1 4-3" stroke="#d8222a" stroke-width="1.500"/><path d="M-8 13-6 4H2L5 13Z" fill="#6f90c8" stroke="#3a5a90" stroke-width=".7"/></g>
<g id="ax9"><use href="#cub" x="7" y="-8"/><path d="M-11-14-11-5-7-8H-3Z" fill="#fff" stroke="#333" stroke-width=".8"/><path d="M-3-1 3-3" stroke="#d8222a" stroke-width="1.500"/><path d="M-11 5C-5 8 1 8 5 4V10C1 14-6 14-10 11Z" fill="#6f90c8" stroke="#3a5a90" stroke-width=".7"/></g>
<g id="ax10"><use href="#cub" x="8" y="-8"/><path d="M-2-1 4-3" stroke="#d8222a" stroke-width="1.500"/><path d="M-8 6-3 4 3 6 2 12-3 14-7 12Z" fill="#c8c8c8" stroke="#666" stroke-width=".7"/></g>
<g id="ax11"><use href="#cub" x="8" y="-8"/><path d="M-2-1 4-3" stroke="#d8222a" stroke-width="1.500"/><use href="#cub" x="-4" y="8"/></g>
<g id="ax12"><use href="#cub" x="8" y="-8"/><path d="M-10-14-10-5-6-8H-2Z" fill="#fff" stroke="#333" stroke-width=".8"/><path d="M-2-1 4-3" stroke="#d8222a" stroke-width="1.500"/><use href="#cub" x="-4" y="8"/></g>
<g id="dash1"><path d="M0 0H22" stroke="#00f" stroke-width="2" stroke-dasharray="6 3"/></g>
<g id="dash2"><path d="M0 0H22" stroke="#8a8aee" stroke-width="2" stroke-dasharray="3 2"/></g>
<g id="floppy"><path d="M-5.500-5.500H4L5.500-4V5.500H-5.500Z" fill="#fff" stroke="#1a3af0" stroke-width="1.400"/><path d="M-3-5H2V-2H-3Z" fill="#1a3af0"/></g>
<g id="nback"><path d="M6-6V-2H1V-6L-6 1 1 8V4H6Z" transform="translate(0 -1)" fill="#eee" stroke="#999" stroke-width="1.100"/></g>
<g id="nfwd"><path d="M-6-6V-2H-1V-6L6 1-1 8V4H-6Z" transform="translate(0 -1)" fill="#eee" stroke="#999" stroke-width="1.100"/></g>
<g id="home"><path d="M0-8-8 0-6 1V8H6V1L8 0Z" fill="#fff" stroke="#000" stroke-width="1.800"/><path d="M-2 8V2H2V8Z" fill="#000"/></g>
<g id="det"><path d="M-6-7H1V8H-6Z" fill="#fff" stroke="#222"/><path d="M1-8 8 0 1 8Z" fill="#111"/><path d="M-4-3H0M-4 0H0M-4 3H0" stroke="#2a70c8"/></g>
<g id="hdrclose"><rect x="-6" y="-6" width="12" height="12" fill="#e6e6e6" stroke="#b5b5b5"/><path d="M-2-2 2 2M2-2-2 2" stroke="#333"/></g>
</defs>

<rect width="1920" height="1040" fill="#f0f0f0"/>
<rect width="1920" height="23" fill="#484846"/>
<circle cx="11" cy="12" r="6.500" fill="#1c5c94"/>
<text x="23" y="16" textLength="180" lengthAdjust="spacingAndGlyphs" style="font-size:13px;fill:#e4e4e4">Без названия - SketchUp Pro 2023</text>
<path d="M1799 10.500H1809" stroke="#eee"/><path d="M1845.500 7.500H1853.500V14M1845.500 7.500V6H1853.500" fill="none" stroke="#eee"/><rect x="1844.500" y="7.500" width="7" height="7.500" fill="none" stroke="#eee"/><path d="M1890 5.500 1900 15.500M1900 5.500 1890 15.500" stroke="#eee" stroke-width="1.100"/>

<rect y="23" width="1920" height="21" fill="#fff"/>
<g>
<text x="8" y="38" textLength="29" lengthAdjust="spacingAndGlyphs">Файл</text><path d="M8 40H15" stroke="#111"/>
<text x="53" y="38" textLength="40" lengthAdjust="spacingAndGlyphs">Правка</text><path d="M53 40H60" stroke="#111"/>
<text x="109" y="38" textLength="20.500" lengthAdjust="spacingAndGlyphs">Вид</text><path d="M109 40H115" stroke="#111"/>
<text x="145" y="38" textLength="41" lengthAdjust="spacingAndGlyphs">Камера</text><path d="M145 40H151" stroke="#111"/>
<text x="202" y="38" textLength="64.500" lengthAdjust="spacingAndGlyphs">Нарисовать</text><path d="M222 40H228" stroke="#111"/>
<text x="283" y="38" textLength="76" lengthAdjust="spacingAndGlyphs">Инструменты</text><path d="M283 40H290" stroke="#111"/>
<text x="375.500" y="38" textLength="28.500" lengthAdjust="spacingAndGlyphs">Окно</text><path d="M376 40H383" stroke="#111"/>
<text x="420" y="38" textLength="70" lengthAdjust="spacingAndGlyphs">Расширения</text><path d="M453 40H461" stroke="#111"/>
<text x="506" y="38" textLength="46" lengthAdjust="spacingAndGlyphs">Справка</text><path d="M506 40H513" stroke="#111"/>
</g>

<path d="M0 83.500H1751.500V44M0 123.500H1547.500V84M0 163.500H1907.500V124" fill="none" stroke="#a9a9a9"/>
<path d="M167.500 44V83M540.500 44V83M803.500 44V83M1031.500 44V83M1368.500 44V83M1487.500 44V83 M269.500 84V123M504.500 84V123M660.500 84V123M930.500 84V123M1049.500 84V123M1241.500 84V123 M300.500 124V163M677.500 124V163M989.500 124V163M1451.500 124V163" stroke="#a9a9a9"/>
<path d="M5 48V80M173 48V80M546 48V80M809 48V80M1037 48V80M1374 48V80M1493 48V80 M5 88V120M275 88V120M510 88V120M665 88V120M936 88V120M1055 88V120M1247 88V120 M5 128V160M306 128V160M683 128V160M995 128V160M1457 128V160" stroke="#999" stroke-width="1.200" stroke-dasharray="1.500 2"/>
<path d="M84.500 90V118M318.500 90V118M744.500 90V118M1290.500 90V118 M564.500 130V158M762.500 130V158M949.500 130V158M1075.500 130V158M1225.500 130V158M1302.500 130V158M1608.500 130V158M1758.500 130V158" stroke="#999"/>
<rect x="196" y="86" width="36" height="37" fill="#b9d9f5"/>
<rect x="586" y="86" width="36" height="37" fill="#b9d9f5"/><rect x="622.500" y="86" width="36" height="37" fill="#b9d9f5"/>

<use href="#ar" x="28" y="64"/><path d="M47 62H55L51 66Z" fill="#111"/>
<use href="#comp" x="75.500" y="64"/><use href="#paint" x="110" y="64"/><use href="#erase" x="147" y="64"/>
<use href="#pencil" x="197" y="64"/><use href="#free" x="232.500" y="64"/><use href="#rect" x="267" y="64"/><use href="#rrect" x="303" y="64"/><use href="#circ" x="340" y="64"/><use href="#poly" x="375.500" y="64"/><use href="#arc1" x="411" y="64"/><use href="#arc2" x="447" y="64"/><use href="#arc3" x="485" y="64"/><use href="#pie" x="519" y="64"/>
<use href="#move" x="568" y="64"/><use href="#pp" x="603" y="64"/><use href="#rot" x="639" y="64"/><use href="#follow" x="676" y="64"/><use href="#scale" x="712.500" y="64"/><use href="#offs" x="747" y="64"/><use href="#shell" x="783.500" y="64"/>
<use href="#tape" x="832" y="64"/><use href="#dim" x="868" y="64"/><use href="#prot" x="904" y="64"/><use href="#txt" x="942" y="64"/><use href="#axes" x="975" y="64"/><use href="#t3d" x="1011" y="64"/>
<use href="#orbit" x="1060" y="64"/><use href="#hand" x="1096" y="64"/><use href="#zoom" x="1132" y="64"/><use href="#zoomw" x="1168.500" y="64"/><use href="#zoomx" x="1204.500" y="64"/><use href="#zoomp" x="1240" y="64"/><use href="#poscam" x="1276" y="64"/><use href="#look" x="1312" y="64"/><use href="#walk" x="1347" y="64"/>
<use href="#hand2" x="1398" y="64"/><use href="#list" x="1430" y="64"/><use href="#green" x="1468" y="64"/>
<use href="#vhouse" x="1516" y="64"/><use href="#vdoor" x="1552" y="64"/><use href="#vhm" x="1588" y="64"/><use href="#vroof" x="1624" y="64"/><use href="#vroof2" x="1660" y="64"/><use href="#vhse" x="1695.500" y="64"/><use href="#vflat" x="1731" y="64"/>

<use href="#f1" x="28" y="104"/><use href="#f2" x="63" y="104"/><use href="#f3" x="105" y="104"/><use href="#f4" x="141.500" y="104"/><use href="#f5" x="178" y="104"/><use href="#f6" x="214" y="104"/><use href="#f7" x="250" y="104"/>
<use href="#x1" x="298" y="104"/><use href="#x2" x="341" y="104"/><use href="#x3" x="375.500" y="104"/><use href="#x4" x="412" y="104"/><use href="#x5" x="448" y="104"/><use href="#x6" x="483.500" y="104"/>
<use href="#sec" x="531" y="104"/><use href="#sp" x="567" y="104"/><use href="#hs1" x="604" y="104"/><use href="#hs1" x="640" y="104"/>
<use href="#sand" x="688" y="104"/><use href="#sand2" x="724" y="104"/><use href="#sand3" x="766" y="104"/><use href="#sand4" x="802" y="104"/><use href="#sand5" x="837.500" y="104"/><use href="#sand6" x="873.500" y="104"/><use href="#sand7" x="909" y="104"/>
<use href="#rc1" x="957.500" y="104"/><use href="#rc2" x="994" y="104"/><use href="#rc3" x="1030" y="104"/>
<g fill="#f0a818"><use href="#big" x="1078" y="104"/></g>
<g fill="#27a03c"><use href="#big" x="1113.500" y="104"/></g><path d="M1113.500 96 1124 115H1103Z" fill="#3cc050" opacity=".7"/>
<g fill="#2570c0"><use href="#big" x="1150" y="104"/></g><path d="M1140 99 1150 94 1160 99 1150 105Z" fill="#8fc0f0" opacity=".7"/>
<g fill="#6f3db0"><use href="#big" x="1185.500" y="104"/></g><path d="M1176 99H1195L1185.500 116Z" fill="#b09ae0"/>
<g fill="#d8402e"><use href="#big" x="1221.500" y="104"/></g><path d="M1226 96C1216 98 1214 106 1222 107 1230 107 1229 114 1219 114" fill="none" stroke="#fff" stroke-width="2"/>
<g fill="#8c6a3a"><use href="#pps" x="1268.500" y="104"/></g>
<g fill="#222"><use href="#pps" x="1312" y="104"/></g>
<g fill="#1428c8"><use href="#pps" x="1347" y="104"/></g>
<g fill="#d84030"><use href="#pps" x="1384" y="104"/></g>
<g fill="#18c828"><use href="#pps" x="1420" y="104"/></g>
<g fill="#8e6a38"><use href="#pps" x="1455.500" y="104"/></g>
<g fill="#f07810"><use href="#pps" x="1491" y="104"/></g>
<g fill="#d818d8"><use href="#pps" x="1527" y="104"/></g>
<text x="1320" y="98" style="font-size:9px;font-weight:bold;fill:#666">=</text><text x="1356" y="98" style="font-size:9px;font-weight:bold;fill:#5050e0">J</text><text x="1392" y="98" style="font-size:9px;font-weight:bold;fill:#e05050">R</text><text x="1429" y="98" style="font-size:9px;font-weight:bold;fill:#20b030">V</text><text x="1464" y="98" style="font-size:9px;font-weight:bold;fill:#222">N</text><text x="1500" y="98" style="font-size:9px;font-weight:bold;fill:#f08020">X</text><text x="1536" y="98" style="font-size:9px;font-weight:bold;fill:#e030e0">F</text>

<use href="#o0" x="28" y="144"/><use href="#o1" x="63" y="144"/><use href="#o2" x="100" y="144"/><use href="#o3" x="137" y="144"/><use href="#o4" x="172" y="144"/><use href="#o5" x="208" y="144"/><use href="#o6" x="244" y="144"/><use href="#o7" x="280" y="144"/>
<use href="#g1" x="328" y="144"/><use href="#g2" x="364.500" y="144"/><use href="#g3" x="401" y="144"/><use href="#g4" x="437" y="144"/><use href="#g5" x="471.500" y="144"/><use href="#g6" x="508" y="144"/><use href="#g7" x="544" y="144"/>
<use href="#g8" x="584" y="144"/><use href="#g9" x="622" y="144"/><use href="#g10" x="658" y="144"/>
<use href="#h1" x="705" y="144"/><use href="#h2" x="742" y="144"/><use href="#h3" x="784" y="144"/><use href="#h4" x="820" y="144"/><use href="#h4" x="855.500" y="144"/><use href="#h5" x="892" y="144"/><use href="#h6" x="928" y="144"/><use href="#h7" x="970.500" y="144"/>
<use href="#j1" x="1017.500" y="144"/><use href="#j2" x="1053.500" y="144"/><use href="#tp" x="1096" y="144"/><use href="#tp" x="1132.500" y="144"/><path d="M1129 140 1137 145 1129 150Z" fill="#888"/><use href="#cl" x="1168.500" y="144"/><use href="#ref" x="1204" y="144"/>
<use href="#tb1" x="1246" y="144"/><use href="#tb2" x="1280" y="144"/>
<use href="#fr1" x="1324" y="144"/><use href="#fr2" x="1360" y="144"/><use href="#fr3" x="1396" y="144"/><use href="#fr4" x="1432" y="144"/>
<use href="#ax1" x="1476" y="144"/><use href="#ax2" x="1513" y="144"/><use href="#ax3" x="1552.500" y="144"/><use href="#ax4" x="1584" y="144"/>
<use href="#ax5" x="1629" y="144"/><use href="#ax6" x="1664" y="144"/><use href="#ax7" x="1700" y="144"/><use href="#ax8" x="1739" y="144"/>
<use href="#ax9" x="1778" y="144"/><use href="#ax10" x="1809" y="144"/><use href="#ax11" x="1845" y="144"/><use href="#ax12" x="1882" y="144"/>

<rect x="0" y="233" width="1584.500" height="778" fill="#cccccc"/>
<rect x="1130" y="164" width="454.500" height="69" fill="url(#sky)"/>
<g fill="none">
<path d="M570 233 574 380" stroke="#2f3fa8"/>
<path d="M753 755 1545 1011" stroke="#c6342f"/>
<path d="M1586 358 1071 535M802 632 753 647" stroke="#3da03d"/>
<path d="M0 514 417 650" stroke="#b04848" stroke-dasharray="2 3"/>
<path d="M0 907 274 814" stroke="#4a9a4a" stroke-dasharray="2 3"/>
<path d="M595 840 601 1011" stroke="#3a3aa8" stroke-dasharray="2 3"/>
</g>
<path d="M474 389 653 409 664 690 488.600 633Z" fill="#ff30ff"/>
<path d="M653 409 748 397 751 771 441.400 909 431 763 660 683Z" fill="#e22ce2"/>
<path d="M261 695 431 763 441.400 909 276 825Z" fill="#ff30ff"/>
<path d="M474 389 570.600 379 748 397 653 409Z" fill="#9b1f9b"/>
<path d="M261 695 488.600 633 660 683 431 763Z" fill="#9b1f9b"/>
<g fill="none" stroke="#2a6e40" stroke-width="1.600">
<path d="M488.600 412.700 637.700 431.600 645.600 679M488.600 412.700 501 637"/>
<path d="M670.400 431 734 422 737.600 758 462 875.500 455 781 677.300 699Z"/>
<path d="M276.800 723.500 417.300 781.700 424 877 285.800 810.700Z"/>
<path d="M296.800 693.700 500 637M296.800 693.700 438 749 643 680"/>
<path d="M505 388 570.600 382 715 396 650 406.500Z"/>
</g>
<path d="M488.600 633 660 683M660 683 663.600 810" stroke="#3a1a50" fill="none"/>
<g fill="none" stroke="#ff0000" stroke-width="2.400" stroke-linejoin="round">
<path d="M474 389 570.600 379 748 397 653 409Z"/>
<path d="M488.600 633 261 695 431 763 660 683"/>
<path d="M276 825 441.400 909 751 771"/>
</g>
<g fill="none" stroke="#ff8c1a" stroke-width="2.600">
<path d="M474 390 488.600 632M653 411 664 682M748 399 751 770M261 697 276 824M431 765 441.400 907"/>
</g>
<g clip-path="url(#cubeclip)">
<rect x="795" y="435" width="290" height="265" fill="#30ffff"/>
<path d="M976 478 1075 450 1075 650 972 700Z" fill="#2de8e2"/>
<path d="M976 480 968 690" stroke="#36ffff" stroke-width="10" filter="url(#b2)" fill="none"/>
<path d="M917 443.500 1052 460Q1072 462 1072.500 478L1064 640Q1063 647 1054 652L968 692Q960 696 952 692L818 658Q803 652 803 640V478Q803 466 818 463Z" fill="none" stroke="#1cc4c4" stroke-width="8" filter="url(#b2)"/>
<path d="M825 468 917 438 1064 456 978 481 965 485Z" fill="#1f9c9c" filter="url(#b2)"/>
</g>
<path d="M917 443.500 1052 460Q1072 462 1072.500 478L1064 640Q1063 647 1054 652L968 692Q960 696 952 692L818 658Q803 652 803 640V478Q803 466 818 463Z" fill="none" stroke="#000" stroke-width="1.300"/>
<g clip-path="url(#pyrclip)">
<rect x="1105" y="525" width="320" height="280" fill="#cf9cff"/>
<path d="M1295 530 1420 730 1350 800 1335 792Z" fill="#ba92ee"/>
<path d="M1276 535 1296 535 1348 795 1318 795Z" fill="#e4a8fb" filter="url(#b2)"/>
<path d="M1268 537 1113 730" stroke="#7a50b0" stroke-width="14" fill="none" filter="url(#b2)"/>
<path d="M1113 732 1127 744" stroke="#9a70d0" stroke-width="5" fill="none" filter="url(#b2)"/>
</g>
<path d="M1268 537Q1281 522 1295 537L1414 731 1350 790Q1343 796 1325 793L1127 744Q1110 738 1113 730Z" fill="none" stroke="#000" stroke-width="1.300"/>
<path d="M1106 668Q1116 670 1115.500 678 1115 686 1106 687" fill="none" stroke="#1515e0" stroke-width="1.500"/>

<rect x="0" y="164" width="1130" height="69" fill="#c9c9c9"/>
<rect x="0" y="184" width="1130" height="33" fill="#d2d2d2"/>
<rect x="0" y="217" width="1130" height="16" fill="#90ee90"/>
<rect x="77.500" y="167.500" width="250" height="13" fill="#ffdfa8" stroke="#f4cf98"/>
<rect x="339" y="167.500" width="344" height="13" fill="#add8e6" stroke="#6f9ee8" stroke-width="1.200"/>
<rect x="695" y="167.500" width="228.500" height="13" fill="#f0e68c" stroke="#ece09a"/>
<rect x="934.500" y="167.500" width="193.500" height="13" fill="#90ee90" stroke="#45a855" stroke-width="1.200"/>
<text class="r" x="152" y="177.500" textLength="98" lengthAdjust="spacingAndGlyphs">EDGE SELECTION</text>
<text class="r" x="438" y="177.500" textLength="145" lengthAdjust="spacingAndGlyphs">ROUNDING PARAMETERS</text>
<text class="r" x="754" y="177.500" textLength="107" lengthAdjust="spacingAndGlyphs">EDGE PROPERTIES</text>
<text class="r" x="959" y="177.500" textLength="143" lengthAdjust="spacingAndGlyphs">GEOMETRY GENERATION</text>

<path d="M5 189 11 197M11 189 5 197" stroke="#e01818" stroke-width="1.800"/>
<rect x="17" y="187" width="13" height="12" fill="#fbf7c0"/><path d="M19 193H28" stroke="#222" stroke-width="1.400" stroke-dasharray="3 1"/>
<path d="M4 204H12L8 214Z" fill="#0a8a30"/><path d="M19 204 27 209 19 214Z" fill="#0a8a30"/>
<g fill="none" stroke="#f0a030" stroke-width="2.500"><path d="M40 197Q47 190 54 197L58 209Q47 214 37 209Z"/></g><path d="M41 188 47 196 53 188M36 212 42 209M58 212 52 209" stroke="#8a8060" fill="none"/>
<rect x="76" y="184" width="40" height="33" fill="#c8ae88"/>
<path d="M78 197 90 189 91 192 79 199Z" fill="#d83020"/><path d="M79 194 89 188" stroke="#2a9a30" stroke-width="2"/>
<path d="M78 204H92V216H78Z" fill="#fff4d8"/><path d="M78 204H92L90 207H81V216H78Z" fill="#e02020"/><path d="M82 207 90 215" stroke="#2a9a30" stroke-width="2.500"/>
<text class="r" x="97" y="197" textLength="13" lengthAdjust="spacingAndGlyphs">19</text><text class="r" x="97" y="213" textLength="13" lengthAdjust="spacingAndGlyphs">14</text>
<path d="M122.500 184V217M204.500 184V217M334.500 184V217M374.500 184V217M454.500 184V217M525.500 184V217M599.500 184V217M688.500 184V217M758.500 184V217M829.500 184V217M928.500 184V217" stroke="#bcbcbc" stroke-width="1.500"/>
<path d="M133 190 151 210M151 190 133 210" stroke="#ee1111" stroke-width="3"/>
<path d="M168 186 171 190H169V192H173V190L176 193 173 196V194H169V196H171L168 200 165 196H167V194H163V196L160 193 163 190V192H167V190H165Z" fill="#ee1111"/>
<path d="M161 209H175M165 206 161 209 165 212M171 206 175 209 171 212" fill="#1a3ad8" stroke="#1a3ad8" stroke-width="1.600"/>
<rect x="178.500" y="185.500" width="19" height="15" fill="#fff" stroke="#888"/><path d="M186 188Q192 192 186 198" fill="none" stroke="#1a8a30" stroke-width="2"/>
<text class="r" x="180" y="213" textLength="14.500" lengthAdjust="spacingAndGlyphs">30</text>
<rect x="208" y="184" width="120" height="16" fill="#fde0b0"/>
<text class="r" x="219.500" y="197" textLength="94" lengthAdjust="spacingAndGlyphs">Edge Prop. Filter</text>
<rect x="209" y="201" width="29" height="16" fill="#fffaf0"/><path d="M209 217V201.500H238" fill="none" stroke="#6e6e6e" stroke-width="1.500"/>
<path d="M210 214H236" stroke="#0000e0" stroke-width="2"/>
<text class="tiny" x="216" y="208">sel</text>
<use href="#dash1" x="242" y="214"/><text class="tiny" x="248" y="208">soft</text>
<use href="#dash2" x="272" y="214"/><text class="tiny" x="272" y="208">smooth</text>
<use href="#dash2" x="301" y="214"/><text class="tiny" x="303" y="208">hidden</text>
<text class="r" x="341" y="197">A</text><text class="r" x="357" y="197">B</text>
<use href="#floppy" x="346" y="209"/><use href="#floppy" x="362" y="209"/>
<rect x="380" y="184" width="69" height="16" fill="#add8e6"/><rect x="380" y="200" width="69" height="17" fill="#90ee90"/>
<text class="r" x="397.500" y="197" textLength="35" lengthAdjust="spacingAndGlyphs">Offset</text>
<text class="r" x="391" y="213" textLength="46.500" lengthAdjust="spacingAndGlyphs">250 mm</text>
<rect x="460" y="184" width="60" height="16" fill="#add8e6"/><rect x="460" y="200" width="60" height="17" fill="#90ee90"/>
<text class="r" x="471" y="197" textLength="36" lengthAdjust="spacingAndGlyphs"># Seg.</text>
<text class="r" x="480" y="213" textLength="19" lengthAdjust="spacingAndGlyphs">12s</text>
<path d="M468 204 463 209 468 214ZM511 204 516 209 511 214Z" fill="#7a9a80"/>
<rect x="531" y="184" width="30" height="33" fill="#fff8ee"/><path d="M531 217V184.500H561" fill="none" stroke="#7a7a7a" stroke-width="1.600"/>
<path d="M538 190V213M553 190V213" stroke="#0a7a28" stroke-width="2.400"/><path d="M545.500 190V213" stroke="#c81818" stroke-width="2.400"/>
<rect x="563" y="184" width="31" height="33" fill="#fff8ee"/><path d="M563 217V184.500H594" fill="none" stroke="#7a7a7a" stroke-width="1.600"/>
<path d="M568 188V213H590" fill="none" stroke="#ee0000" stroke-width="2"/><path d="M575 188Q576 204 590 206" fill="none" stroke="#0a7a28" stroke-width="2"/>
<rect x="604" y="184" width="80" height="16" fill="#add8e6"/>
<text class="r" x="629.500" y="197" textLength="27.500" lengthAdjust="spacingAndGlyphs">Pivot</text>
<path d="M609.500 200V212H621" fill="none" stroke="#0000c8" stroke-width="2"/><path d="M609.500 212 622 208" stroke="#d04040"/>
<rect x="624" y="200" width="20" height="17" fill="#ff6347"/><rect x="644" y="200" width="20" height="17" fill="#32cd32"/><rect x="664" y="200" width="20" height="17" fill="#fff"/><path d="M664 217V200.500H684" stroke="#777" fill="none"/>
<text class="r" x="630" y="213">X</text><text class="r" x="649" y="213">Y</text><text class="r" x="669" y="213">Z</text>
<rect x="694" y="184" width="60" height="16" fill="#f0e68c"/><rect x="764" y="184" width="60" height="16" fill="#f0e68c"/><rect x="834" y="184" width="90" height="16" fill="#f0e68c"/>
<text class="r" x="701.500" y="197" textLength="43.500" lengthAdjust="spacingAndGlyphs">Borders</text>
<text class="r" x="770.500" y="197" textLength="45" lengthAdjust="spacingAndGlyphs">Corners</text>
<text class="r" x="844" y="197" textLength="68" lengthAdjust="spacingAndGlyphs">Inner Edges</text>
<g fill="#fffaf0"><rect x="695" y="201" width="29" height="16"/><rect x="765" y="201" width="29" height="16"/><rect x="795" y="201" width="29" height="16"/><rect x="835" y="201" width="29" height="16"/><rect x="865" y="201" width="29" height="16"/></g>
<path d="M695 217V201.500H724M765 217V201.500H794M795 217V201.500H824M835 217V201.500H864M865 217V201.500H894" fill="none" stroke="#6e6e6e" stroke-width="1.400"/>
<use href="#dash1" x="699" y="214"/><use href="#dash2" x="729" y="214"/><use href="#dash1" x="769" y="214"/><use href="#dash2" x="799" y="214"/><use href="#dash1" x="839" y="214"/><use href="#dash2" x="869" y="214"/><use href="#dash2" x="898" y="214"/>
<text class="tiny" x="704" y="208">soft</text><text class="tiny" x="729" y="208">smooth</text><text class="tiny" x="774" y="208">soft</text><text class="tiny" x="799" y="208">smooth</text><text class="tiny" x="844" y="208">soft</text><text class="tiny" x="869" y="208">smooth</text><text class="tiny" x="900" y="208">hidden</text>
<rect x="935" y="184" width="77" height="33" fill="#90ee90"/>
<text class="r" x="941.500" y="197" textLength="60.500" lengthAdjust="spacingAndGlyphs">GENERATE</text>
<text class="r" x="941" y="213" textLength="64" lengthAdjust="spacingAndGlyphs">GEOMETRY</text>
<path d="M1019 201 1028 193V198L1033 200 1041 190 1040 202 1032 212 1027 206V205Z" fill="#adadad"/>
<path d="M1063 192 1069 198M1079 192 1073 198M1063 210 1069 204M1079 210 1073 204" stroke="#eee" stroke-width="2.600"/>
<path d="M1100.500 187 1114 183V216L1100.500 211Z" fill="#a82a2a" stroke="#6a2020"/><path d="M1114 184H1119V190" fill="none" stroke="#777"/><path d="M1111 197H1118V192L1126 201 1118 209V205H1111Z" fill="#0f8a2a"/>
<text class="r" x="2.500" y="228" textLength="88.500" lengthAdjust="spacingAndGlyphs">Click to Execute</text>
<rect x="1584.500" y="164" width="335.500" height="847" fill="#f0f0f0"/>

<rect x="1589.500" y="165" width="330" height="27" fill="url(#tray)"/>
<text x="1594" y="184" textLength="106" lengthAdjust="spacingAndGlyphs" style="font-size:11.500px">Лоток по умолчанию</text>
<rect x="1887.500" y="175" width="8" height="9" fill="none" stroke="#555"/><path d="M1888 174H1896M1892 176V184" stroke="#555"/>
<rect x="1906" y="175" width="9" height="9" fill="none" stroke="#555"/><path d="M1908 177 1913 182M1913 177 1908 182" stroke="#555"/>
<rect x="1590" y="192" width="330" height="28" fill="#f7fafd"/>
<path d="M1903 208 1907 204 1911 208" fill="none" stroke="#444" stroke-width="1.500"/>
<rect x="1590" y="220" width="310" height="788" fill="#f0f0f0"/>
<rect x="1900" y="220" width="20" height="788" fill="#f0f0f0"/>
<rect x="1900" y="342" width="15" height="541" fill="#cdcdcd"/>

<g>
<rect x="1591" y="222" width="308" height="19" fill="url(#hdr)" stroke="#aaa"/><path d="M1598 228V235L1604 231.500Z" fill="#111"/><text class="t" x="1610.700" y="236" textLength="31.500" lengthAdjust="spacingAndGlyphs">Метки</text><use href="#hdrclose" x="1889" y="231"/>
<rect x="1591" y="243" width="308" height="19" fill="url(#hdr)" stroke="#aaa"/><path d="M1598 249H1605L1601.500 255Z" fill="#111"/><text class="t" x="1610.700" y="257" textLength="31" lengthAdjust="spacingAndGlyphs">Стили</text><use href="#hdrclose" x="1889" y="252"/>
<rect x="1591" y="600" width="308" height="20" fill="url(#hdr)" stroke="#aaa"/><path d="M1598 606H1605L1601.500 612Z" fill="#111"/><text class="t" x="1610.700" y="615" textLength="57" lengthAdjust="spacingAndGlyphs">Материалы</text><use href="#hdrclose" x="1889" y="610"/>
<rect x="1591" y="958" width="308" height="20" fill="url(#hdr)" stroke="#aaa"/><path d="M1598 964V971L1604 967.500Z" fill="#111"/><text class="t" x="1610.700" y="973" textLength="62" lengthAdjust="spacingAndGlyphs">Компоненты</text><use href="#hdrclose" x="1889" y="967"/>
<rect x="1591" y="979" width="308" height="20" fill="url(#hdr)" stroke="#aaa"/><path d="M1598 985V992L1604 988.500Z" fill="#111"/><text class="t" x="1610.700" y="994" textLength="32.500" lengthAdjust="spacingAndGlyphs">Сцены</text><use href="#hdrclose" x="1889" y="988"/>
<rect x="1591" y="1001" width="308" height="7" fill="url(#hdr)" stroke="#aaa"/>
<path d="M1904 997 1908 1001 1912 997" fill="none" stroke="#444" stroke-width="1.500"/>
</g>

<rect x="1593.500" y="265.500" width="65" height="69" fill="url(#thsky)" stroke="#aaa"/>
<rect x="1594" y="300" width="64" height="34" fill="#c9c9c9"/>
<g transform="translate(1593 262) scale(1.350 1.450)"><use href="#thgeo"/></g>
<rect x="1662.500" y="264.500" width="208" height="19" fill="#fff" stroke="#999"/>
<rect x="1662.500" y="285.500" width="208" height="49" fill="#fff" stroke="#999"/>
<text class="t" x="1667" y="278" textLength="167" lengthAdjust="spacingAndGlyphs">Стиль городского планирования</text>
<text class="t" x="1667" y="299" textLength="180" lengthAdjust="spacingAndGlyphs" xml:space="preserve">Цвета грани по умолчанию.  Ребра</text>
<text class="t" x="1667" y="312" textLength="190" lengthAdjust="spacingAndGlyphs">профиля. Голубое небо и серый фон.</text>
<path d="M1881 268H1891V272L1886 276 1881 272ZM1881 282H1891V271L1886 276 1881 271Z" fill="#111"/><path d="M1881 276H1891V282H1881Z" fill="#111"/><path d="M1886 277V281M1884 279H1888" stroke="#fff"/>
<circle cx="1882" cy="302" r="5" fill="#fff" stroke="#222" stroke-width="1.200"/><path d="M1882 299V305M1879 302H1885" stroke="#222"/><path d="M1885 294 1893 290 1895 294 1887 299Z" fill="#8a9060"/><rect x="1890" y="295" width="5" height="6" fill="#4040b0"/>
<path d="M1879 319A7 7 0 0 1 1891 316M1893 323A7 7 0 0 1 1881 326" fill="none" stroke="#999" stroke-width="1.700"/><path d="M1892 313V319H1887ZM1880 329V323H1885Z" fill="#999"/>
<rect x="1590" y="345" width="310" height="50" fill="#f0f0f0"/>
<path d="M1590 363.500H1900" stroke="#ddd"/>
<rect x="1590" y="345" width="59" height="19" fill="#f6f6f6"/>
<path d="M1649.500 346V363H1696.500V346H1649.500M1696.500 363H1762.500V346H1696.500" fill="none" stroke="#dcdcdc"/>
<text class="t" x="1597" y="357" textLength="44" lengthAdjust="spacingAndGlyphs">Выбрать</text>
<text class="t" x="1653" y="359" textLength="37" lengthAdjust="spacingAndGlyphs">Правка</text>
<text class="t" x="1702.500" y="359" textLength="55.500" lengthAdjust="spacingAndGlyphs">Соединить</text>
<rect x="1594" y="364" width="306" height="30" fill="#f4f4f4"/>
<use href="#nback" x="1608" y="379"/><use href="#nfwd" x="1632" y="379"/><use href="#home" x="1656" y="379"/>
<rect x="1669.500" y="370.500" width="204" height="23" fill="#fff" stroke="#a0a0a0"/>
<text class="t" x="1673" y="386" textLength="106" lengthAdjust="spacingAndGlyphs">Стили по умолчанию</text>
<path d="M1861 381 1865 385 1869 381" fill="none" stroke="#555"/>
<use href="#det" x="1888" y="378"/>
<path d="M1594 394.500H1900" stroke="#aaa"/>
<rect x="1590" y="395" width="310" height="195" fill="#fff"/>
<path d="M1590 589.500H1900" stroke="#ddd"/>
<g>
<g transform="translate(1597 397)"><rect x=".5" y=".5" width="49" height="48" fill="#fff" stroke="#a0a0a0"/><rect x="2" y="17" width="46" height="30" fill="#dcdcdc"/><use href="#thgeo"/><use href="#clock"/></g>
<g transform="translate(1649 397)"><rect x=".5" y=".5" width="49" height="48" fill="#fff" stroke="#a0a0a0"/><use href="#thgeo"/><use href="#clock"/></g>
<g transform="translate(1701 397)"><rect x=".5" y=".5" width="49" height="48" fill="#fff" stroke="#a0a0a0"/><use href="#thgeo"/><use href="#clock"/></g>
<g transform="translate(1753 397)"><rect x=".5" y=".5" width="49" height="48" fill="#fff" stroke="#a0a0a0"/><path d="M5 17 19 6 34 5 24 18ZM5 17 24 18 25 44 6 37ZM24 18 34 5V18" fill="#fff" stroke="#333" stroke-width=".7"/><path d="M26 21H44M26 21V41H44" fill="none" stroke="#111" stroke-width="1.400"/><path d="M3 38 46 25" stroke="#30a040"/><path d="M4 1 5 17" stroke="#3030a0" stroke-width=".8"/><use href="#clock"/></g>
<g transform="translate(1805 397)"><rect x=".5" y=".5" width="49" height="48" fill="#c9c9c9" stroke="#a0a0a0"/><rect x="2" y="2" width="46" height="22" fill="url(#thsky)"/><use href="#thgeo"/></g>
<g transform="translate(1597 449)"><rect x=".5" y=".5" width="49" height="48" fill="#fff" stroke="#a0a0a0"/><path d="M5 17 19 6 34 5 24 18Z" fill="#bbb" stroke="#444" stroke-width=".7"/><path d="M5 17 24 18 25 44 6 37Z" fill="#e0e0e0" stroke="#555" stroke-width=".7"/><path d="M26 21Q35 17 44 20V39Q35 44 26 41Z" fill="#d8e4d8" stroke="#555" stroke-width=".7"/><rect x="26" y="34" width="18" height="7" fill="#a0b890"/><path d="M4 1 5 17" stroke="#3030a0" stroke-width=".8"/><use href="#clock"/></g>
<g transform="translate(1649 449)"><rect x=".5" y=".5" width="49" height="48" fill="#fff" stroke="#a0a0a0"/><path d="M5 17 19 6 34 5 24 18ZM5 17 24 18 25 44 6 37ZM26 21Q35 17 44 20V39Q35 44 26 41Z" fill="#fff" stroke="#666" stroke-width=".7"/><path d="M4 1 5 17" stroke="#3030a0" stroke-width=".8"/><use href="#clock"/></g>
<g transform="translate(1701 449)"><rect x=".5" y=".5" width="49" height="48" fill="#c9c9c9" stroke="#a0a0a0"/><rect x="2" y="2" width="46" height="22" fill="url(#thsky)"/><use href="#thgeored"/></g>
<g transform="translate(1753 449)"><rect x=".5" y=".5" width="49" height="48" fill="#c9c9c9" stroke="#a0a0a0"/><rect x="2" y="2" width="46" height="18" fill="#ececec"/><use href="#thgeo"/></g>
<g transform="translate(1805 449)"><rect x=".5" y=".5" width="49" height="48" fill="#c9c9c9" stroke="#a0a0a0"/><rect x="2" y="2" width="46" height="22" fill="url(#thsky)"/><use href="#thgeo"/></g>
<g transform="translate(1597 501)"><rect x=".5" y=".5" width="49" height="48" fill="#d0d0d0" stroke="#a0a0a0"/><use href="#thgeo"/></g>
<g transform="translate(1649 501)"><rect x=".5" y=".5" width="49" height="48" fill="#a8a888" stroke="#a0a0a0"/><rect x="2" y="2" width="46" height="22" fill="#b8c4d4"/><use href="#thgeo"/></g>
<g transform="translate(1701 501)"><rect x=".5" y=".5" width="49" height="48" fill="#c4c4ac" stroke="#a0a0a0"/><rect x="2" y="2" width="46" height="22" fill="#dce4dc"/><use href="#thgeo"/></g>
<g transform="translate(1753 501)"><rect x=".5" y=".5" width="49" height="48" fill="#fff" stroke="#a0a0a0"/><use href="#thgeo"/></g>
</g>

<rect x="1593.500" y="623.500" width="65" height="69" fill="#f0f0f0" stroke="#aaa"/>
<rect x="1594" y="624" width="64" height="65" fill="#ff22ff"/>
<path d="M1656 680V687H1648Z" fill="#fff" opacity=".75"/>
<rect x="1662.500" y="622.500" width="208" height="19" fill="#fff" stroke="#999"/>
<text class="t" x="1667" y="636" textLength="48" lengthAdjust="spacingAndGlyphs">Цвет К04</text>
<path d="M1881 625H1891V629L1886 633 1881 629Z" fill="#111"/><path d="M1881 633H1891V639H1881Z" fill="#111"/><path d="M1886 634V638M1884 636H1888" stroke="#fff"/>
<path d="M1879 654 1892 647 1894 654 1892 660 1882 665Z" fill="#333"/><path d="M1881 653 1892 649M1882 656 1893 652" stroke="#ddd" fill="none"/><circle cx="1881" cy="660" r="5" fill="#fff" stroke="#111" stroke-width="1.200"/><path d="M1881 657V663M1878 660H1884" stroke="#111"/>
<rect x="1875" y="670" width="21" height="22" fill="#fafafa"/><path d="M1875 670 1896 692H1875Z" fill="#a8b4c0"/>
<path d="M1590 695.500H1900" stroke="#bbb"/>
<rect x="1590" y="702" width="59" height="19" fill="#f6f6f6"/>
<path d="M1649.500 703V720H1694.500V703H1649.500" fill="none" stroke="#dcdcdc"/>
<text class="t" x="1597" y="715" textLength="44" lengthAdjust="spacingAndGlyphs">Выбрать</text>
<text class="t" x="1653" y="717" textLength="37" lengthAdjust="spacingAndGlyphs">Правка</text>
<path d="M1880 713 1888 705 1892 709 1884 717 1878 719Z" fill="#c8a040" stroke="#222"/><path d="M1888 703 1894 699 1896 701 1892 708Z" fill="#111"/>
<rect x="1594" y="721" width="306" height="31" fill="#f4f4f4"/>
<use href="#nback" x="1608" y="736"/><use href="#nfwd" x="1632" y="736"/><use href="#home" x="1656" y="736"/>
<rect x="1669.500" y="728.500" width="204" height="23" fill="#fff" stroke="#a0a0a0"/>
<text class="t" x="1673" y="744" textLength="32" lengthAdjust="spacingAndGlyphs">Цвета</text>
<path d="M1861 739 1865 743 1869 739" fill="none" stroke="#555"/>
<use href="#det" x="1888" y="736"/>
<rect x="1590" y="753" width="310" height="200" fill="#fff"/>
<rect x="1884" y="753" width="15" height="199" fill="#f4f4f4"/>
<rect x="1884" y="869" width="15" height="17" fill="#c8c8c8"/>
<path d="M1887 764 1891.500 759 1896 764M1887 941 1891.500 946 1896 941" fill="none" stroke="#555" stroke-width="1.400"/>
<g stroke="#a8a8a8">
<g fill="#fff">
<rect x="1597.500" y="753" width="49" height="47.500"/><rect x="1649.500" y="753" width="49" height="47.500"/><rect x="1701.500" y="753" width="49" height="47.500"/><rect x="1753.500" y="753" width="49" height="47.500"/><rect x="1805.500" y="753" width="49" height="47.500"/>
<rect x="1597.500" y="803.500" width="49" height="49"/><rect x="1649.500" y="803.500" width="49" height="49"/><rect x="1701.500" y="803.500" width="49" height="49"/><rect x="1753.500" y="803.500" width="49" height="49"/><rect x="1805.500" y="803.500" width="49" height="49"/>
<rect x="1597.500" y="855.500" width="49" height="49"/><rect x="1649.500" y="855.500" width="49" height="49"/><rect x="1701.500" y="855.500" width="49" height="49"/><rect x="1753.500" y="855.500" width="49" height="49"/><rect x="1805.500" y="855.500" width="49" height="49"/>
<rect x="1597.500" y="907.500" width="49" height="49"/><rect x="1649.500" y="907.500" width="49" height="49"/><rect x="1701.500" y="907.500" width="49" height="49"/><rect x="1753.500" y="907.500" width="49" height="49"/><rect x="1805.500" y="907.500" width="49" height="49"/>
</g>
</g>
<g>
<rect x="1599" y="753" width="46" height="46" fill="#000099"/><rect x="1651" y="753" width="46" height="46" fill="#000066"/><rect x="1703" y="753" width="46" height="46" fill="#e5ccff"/><rect x="1755" y="753" width="46" height="46" fill="#cc99ff"/><rect x="1807" y="753" width="46" height="46" fill="#b266ff"/>
<rect x="1599" y="805" width="46" height="46" fill="#9933ff"/><rect x="1651" y="805" width="46" height="46" fill="#7f00ff"/><rect x="1703" y="805" width="46" height="46" fill="#6600cc"/><rect x="1755" y="805" width="46" height="46" fill="#4c0099"/><rect x="1807" y="805" width="46" height="46" fill="#330066"/>
<rect x="1599" y="857" width="46" height="46" fill="#ffccff"/><rect x="1651" y="857" width="46" height="46" fill="#ff99ff"/><rect x="1703" y="857" width="46" height="46" fill="#ff66ff"/><rect x="1755" y="857" width="46" height="46" fill="#ff33ff"/><rect x="1807" y="857" width="46" height="46" fill="#ff00ff"/>
<rect x="1599" y="909" width="46" height="46" fill="#cc00cc"/><rect x="1651" y="909" width="46" height="46" fill="#990099"/><rect x="1703" y="909" width="46" height="46" fill="#660066"/><rect x="1755" y="909" width="46" height="46" fill="#ffcce5"/><rect x="1807" y="909" width="46" height="46" fill="#ff99cc"/>
</g>
<path d="M1594 752.500H1900" stroke="#aaa"/>
<rect x="1590" y="952" width="310" height="5.500" fill="#f0f0f0"/><path d="M1590 954.500H1899" stroke="#ccc"/>
<rect x="1590" y="1008" width="330" height="3" fill="#f0f0f0"/>

<rect y="1011" width="1920" height="29" fill="#f0f0f0"/>
<circle cx="14" cy="1027" r="6" fill="#f4f4f4" stroke="#aaa"/><path d="M14 1031 11 1026A3 3 0 1 1 17 1026Z" fill="none" stroke="#aaa"/>
<circle cx="38" cy="1027" r="6" fill="#fff" stroke="#111" stroke-width="1.300"/><path d="M38 1026V1031" stroke="#111" stroke-width="2"/><circle cx="38" cy="1023.500" r="1.200" fill="#111"/>
<path d="M56.500 1014V1038M1667.500 1015V1037" stroke="#aaa"/>
<text x="63" y="1031" textLength="665" lengthAdjust="spacingAndGlyphs" style="font-size:12.500px;fill:#111">Round Corner: Click on Edges, Vertex, Faces to add / remove edges (See Palette and contextual menu for options)</text>
<text x="1678" y="1031.500" textLength="34.500" lengthAdjust="spacingAndGlyphs" style="font-size:12.500px">Offset</text>
<rect x="1719.500" y="1014.500" width="198" height="22" fill="#fff" stroke="#888"/>
<text x="1720.500" y="1031.500" textLength="76.500" lengthAdjust="spacingAndGlyphs" style="font-size:12.500px">250 mm , 12s</text>
</svg>
</body></html>
